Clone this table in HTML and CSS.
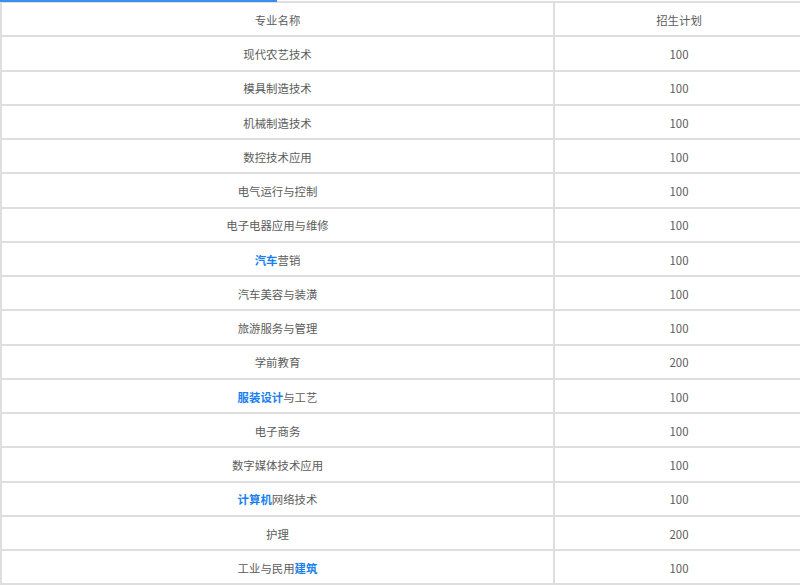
FILE: index.html
```html
<!DOCTYPE html>
<html lang="zh-CN">
<head>
<meta charset="utf-8">
<title>招生计划</title>
<link rel="stylesheet" href="styles.css">
</head>
<body>
<div class="wrap">
  <div class="progress"></div>
  <div class="table">
    <div class="row head"><div class="cell">专业名称</div><div class="cell num">招生计划</div></div>
    <div class="row"><div class="cell">现代农艺技术</div><div class="cell num">100</div></div>
    <div class="row"><div class="cell">模具制造技术</div><div class="cell num">100</div></div>
    <div class="row"><div class="cell">机械制造技术</div><div class="cell num">100</div></div>
    <div class="row"><div class="cell">数控技术应用</div><div class="cell num">100</div></div>
    <div class="row"><div class="cell">电气运行与控制</div><div class="cell num">100</div></div>
    <div class="row"><div class="cell">电子电器应用与维修</div><div class="cell num">100</div></div>
    <div class="row"><div class="cell"><a class="kw">汽车</a>营销</div><div class="cell num">100</div></div>
    <div class="row"><div class="cell">汽车美容与装潢</div><div class="cell num">100</div></div>
    <div class="row"><div class="cell">旅游服务与管理</div><div class="cell num">100</div></div>
    <div class="row"><div class="cell">学前教育</div><div class="cell num">200</div></div>
    <div class="row"><div class="cell"><a class="kw">服装设计</a>与工艺</div><div class="cell num">100</div></div>
    <div class="row"><div class="cell">电子商务</div><div class="cell num">100</div></div>
    <div class="row"><div class="cell">数字媒体技术应用</div><div class="cell num">100</div></div>
    <div class="row"><div class="cell"><a class="kw">计算机</a>网络技术</div><div class="cell num">100</div></div>
    <div class="row"><div class="cell">护理</div><div class="cell num">200</div></div>
    <div class="row"><div class="cell">工业与民用<a class="kw">建筑</a></div><div class="cell num">100</div></div>
  </div>
</div>
</body>
</html>
```
FILE: styles.css
```css
html, body {
  margin: 0;
  padding: 0;
  background: #fff;
  overflow: hidden;
}
.wrap {
  position: relative;
  width: 810px;
  padding-top: 1px;
}
.progress {
  position: absolute;
  left: 0;
  top: 0;
  width: 277px;
  height: 2px;
  background: #3b8ef0;
}
.table {
  width: 807px;
  border-top: 2px solid #dedede;
  border-left: 2px solid #dedede;
  font-family: "Noto Sans CJK SC", "Microsoft YaHei", sans-serif;
  font-size: 11.4px;
  color: #5c5c5c;
}
.row {
  display: grid;
  grid-template-columns: 551px 254px;
  box-sizing: border-box;
  height: 34.25px;
  border-bottom: 2px solid #dedede;
}
.cell {
  display: flex;
  align-items: center;
  justify-content: center;
  padding-top: 1.5px;
}
.cell.num {
  border-left: 2px solid #dedede;
  padding-right: 4px;
}
.kw {
  color: #1a7ff0;
  font-weight: bold;
  text-decoration: none;
}
```
